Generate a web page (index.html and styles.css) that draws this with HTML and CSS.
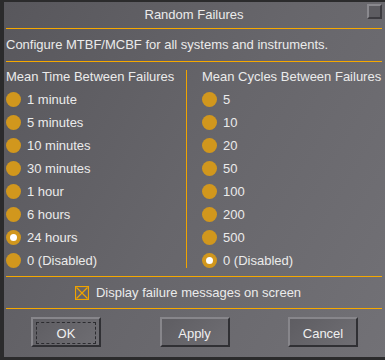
FILE: index.html
```html
<!DOCTYPE html>
<html lang="en">
<head>
  <meta charset="UTF-8" />
  <title>Random Failures</title>
  <link rel="stylesheet" href="styles.css">
</head>
<body>
  <div class="dialog">
    <div class="titlebar">
      <span class="title">Random Failures</span>
      <span class="close"></span>
    </div>
    <div class="rule"></div>
    <p class="intro">Configure MTBF/MCBF for all systems and instruments.</p>
    <div class="rule"></div>

    <div class="columns">
      <!-- MTBF -->
      <div class="col">
        <h2>Mean Time Between Failures</h2>
        <ul class="options">
          <li><span class="radio"></span>1 minute</li>
          <li><span class="radio"></span>5 minutes</li>
          <li><span class="radio"></span>10 minutes</li>
          <li><span class="radio"></span>30 minutes</li>
          <li><span class="radio"></span>1 hour</li>
          <li><span class="radio"></span>6 hours</li>
          <li><span class="radio on"></span>24 hours</li>
          <li><span class="radio"></span>0 (Disabled)</li>
        </ul>
      </div>
      <div class="divider"></div>
      <!-- MCBF -->
      <div class="col right">
        <h2>Mean Cycles Between Failures</h2>
        <ul class="options">
          <li><span class="radio"></span>5</li>
          <li><span class="radio"></span>10</li>
          <li><span class="radio"></span>20</li>
          <li><span class="radio"></span>50</li>
          <li><span class="radio"></span>100</li>
          <li><span class="radio"></span>200</li>
          <li><span class="radio"></span>500</li>
          <li><span class="radio on"></span>0 (Disabled)</li>
        </ul>
      </div>
    </div>

    <div class="rule"></div>
    <div class="check">
      <svg class="box" width="14" height="14" viewBox="0 0 14 14">
        <rect x="0.5" y="0.5" width="13" height="13" fill="none" stroke="#f0a400" stroke-width="1.2"/>
        <path d="M1.5 1.5 L12.5 12.5 M12.5 1.5 L1.5 12.5" stroke="#f0a400" stroke-width="1.2"/>
      </svg>
      Display failure messages on screen
    </div>
    <div class="rule"></div>

    <div class="buttons">
      <button class="focus"><span>OK</span></button>
      <button><span>Apply</span></button>
      <button><span>Cancel</span></button>
    </div>
  </div>
</body>
</html>
```

FILE: styles.css
```css
body {
  margin: 0;
  background: #2b2b2c;
  font-family: 'Liberation Sans', Arial, sans-serif;
  font-size: 13px;
  color: #ebebeb;
}
.dialog {
  margin: 2px 0 0 4px;
  height: 355px;
  padding: 0 3px 0 2px;
  background: linear-gradient(120deg, #58575c 0%, #67666b 50%, #727176 100%);
  box-sizing: border-box;
  white-space: nowrap;
}
.titlebar {
  height: 26px;
  display: flex;
  align-items: center;
  justify-content: center;
  position: relative;
}
.title {
  margin-top: -2px;
}
.close {
  position: absolute;
  right: 0;
  top: 2px;
  width: 15px;
  height: 15px;
  box-sizing: border-box;
  border: 2px solid #8a898e;
  border-right-color: #3c3b40;
  border-bottom-color: #3c3b40;
  background: #5d5c61;
}
.rule {
  height: 1px;
  background: #f5a800;
}
.intro {
  margin: 0;
  height: 32px;
  line-height: 32px;
}
.columns {
  display: flex;
  height: 214px;
}
.col {
  width: 182px;
}
.col.right {
  padding-left: 15px;
}
.divider {
  width: 1px;
  background: #f0a400;
  margin: 8px 0 8px;
}
.col h2 {
  font-size: 13px;
  font-weight: normal;
  margin: 6px 0 3px;
  line-height: 17px;
}
.options {
  list-style: none;
  margin: 0;
  padding: 0;
}
.options li {
  display: flex;
  align-items: center;
  height: 23px;
}
.radio {
  width: 15px;
  height: 15px;
  border-radius: 50%;
  background: #d1971d;
  margin-right: 6px;
  display: flex;
  align-items: center;
  justify-content: center;
}
.radio.on::after {
  content: "";
  width: 7px;
  height: 7px;
  border-radius: 50%;
  background: #ffffff;
}
.check {
  height: 31px;
  display: flex;
  align-items: center;
  justify-content: center;
  gap: 7px;
  padding-right: 12px;
}
.buttons {
  display: flex;
  justify-content: space-between;
  padding: 8px 24px 0 25px;
}
button {
  width: 70px;
  height: 30px;
  padding: 3px;
  box-sizing: border-box;
  font: inherit;
  color: #f0f0f0;
  background: linear-gradient(135deg, #5e5d62, #6f6e73);
  border: 2px solid #87868b;
  border-right-color: #303034;
  border-bottom-color: #303034;
}
button span {
  display: flex;
  align-items: center;
  justify-content: center;
  height: 100%;
  border: 1px dashed transparent;
}
button.focus span {
  border-color: #2c2c30;
}
```
